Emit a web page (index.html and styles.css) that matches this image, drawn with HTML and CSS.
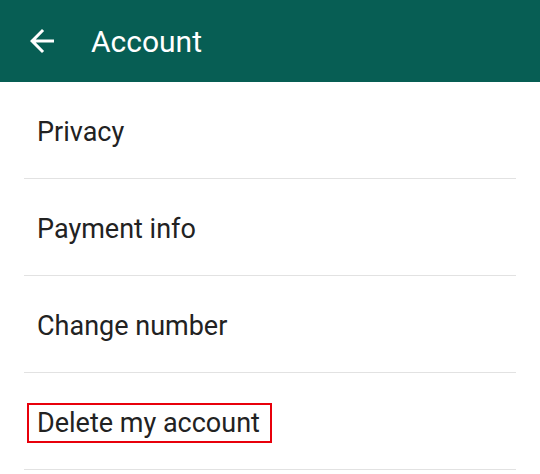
FILE: index.html
```html
<!DOCTYPE html>
<html>
<head>
<meta charset="utf-8">
<link rel="stylesheet" href="styles.css">
</head>
<body>
<header class="appbar">
  <svg class="back" width="36" height="36" viewBox="0 0 24 24"><path d="M20 11H7.83l5.59-5.59L12 4l-8 8 8 8 1.41-1.41L7.83 13H20v-2z" fill="#fff"/></svg>
  <h1 class="title">Account</h1>
</header>
<ul class="list">
  <li class="item"><span class="label">Privacy</span></li>
  <li class="item"><span class="label">Payment info</span></li>
  <li class="item"><span class="label">Change number</span></li>
  <li class="item"><span class="label highlight">Delete my account</span></li>
</ul>
</body>
</html>
```
FILE: styles.css
```css
html, body {
  margin: 0;
  padding: 0;
  background: #fff;
  font-family: Roboto, "Noto Sans", sans-serif;
}
.appbar {
  height: 82px;
  background: #075e54;
  display: flex;
  align-items: center;
  padding-left: 24px;
  box-sizing: border-box;
}
.back {
  display: block;
  flex: none;
}
.title {
  margin: 0 0 0 31px;
  color: #fff;
  font-size: 30px;
  font-weight: 400;
}
.list {
  list-style: none;
  margin: 0 24px;
  padding: 0;
}
.item {
  height: 96px;
  border-bottom: 1px solid #e2e2e2;
  display: flex;
  align-items: center;
  padding-left: 13px;
}
.label {
  font-size: 27px;
  color: #222;
  padding-top: 3px;
}
.highlight {
  position: relative;
}
.highlight::after {
  content: "";
  position: absolute;
  left: -10px;
  right: -12px;
  top: -1px;
  bottom: -4px;
  border: 2px solid #e8000b;
}
```
